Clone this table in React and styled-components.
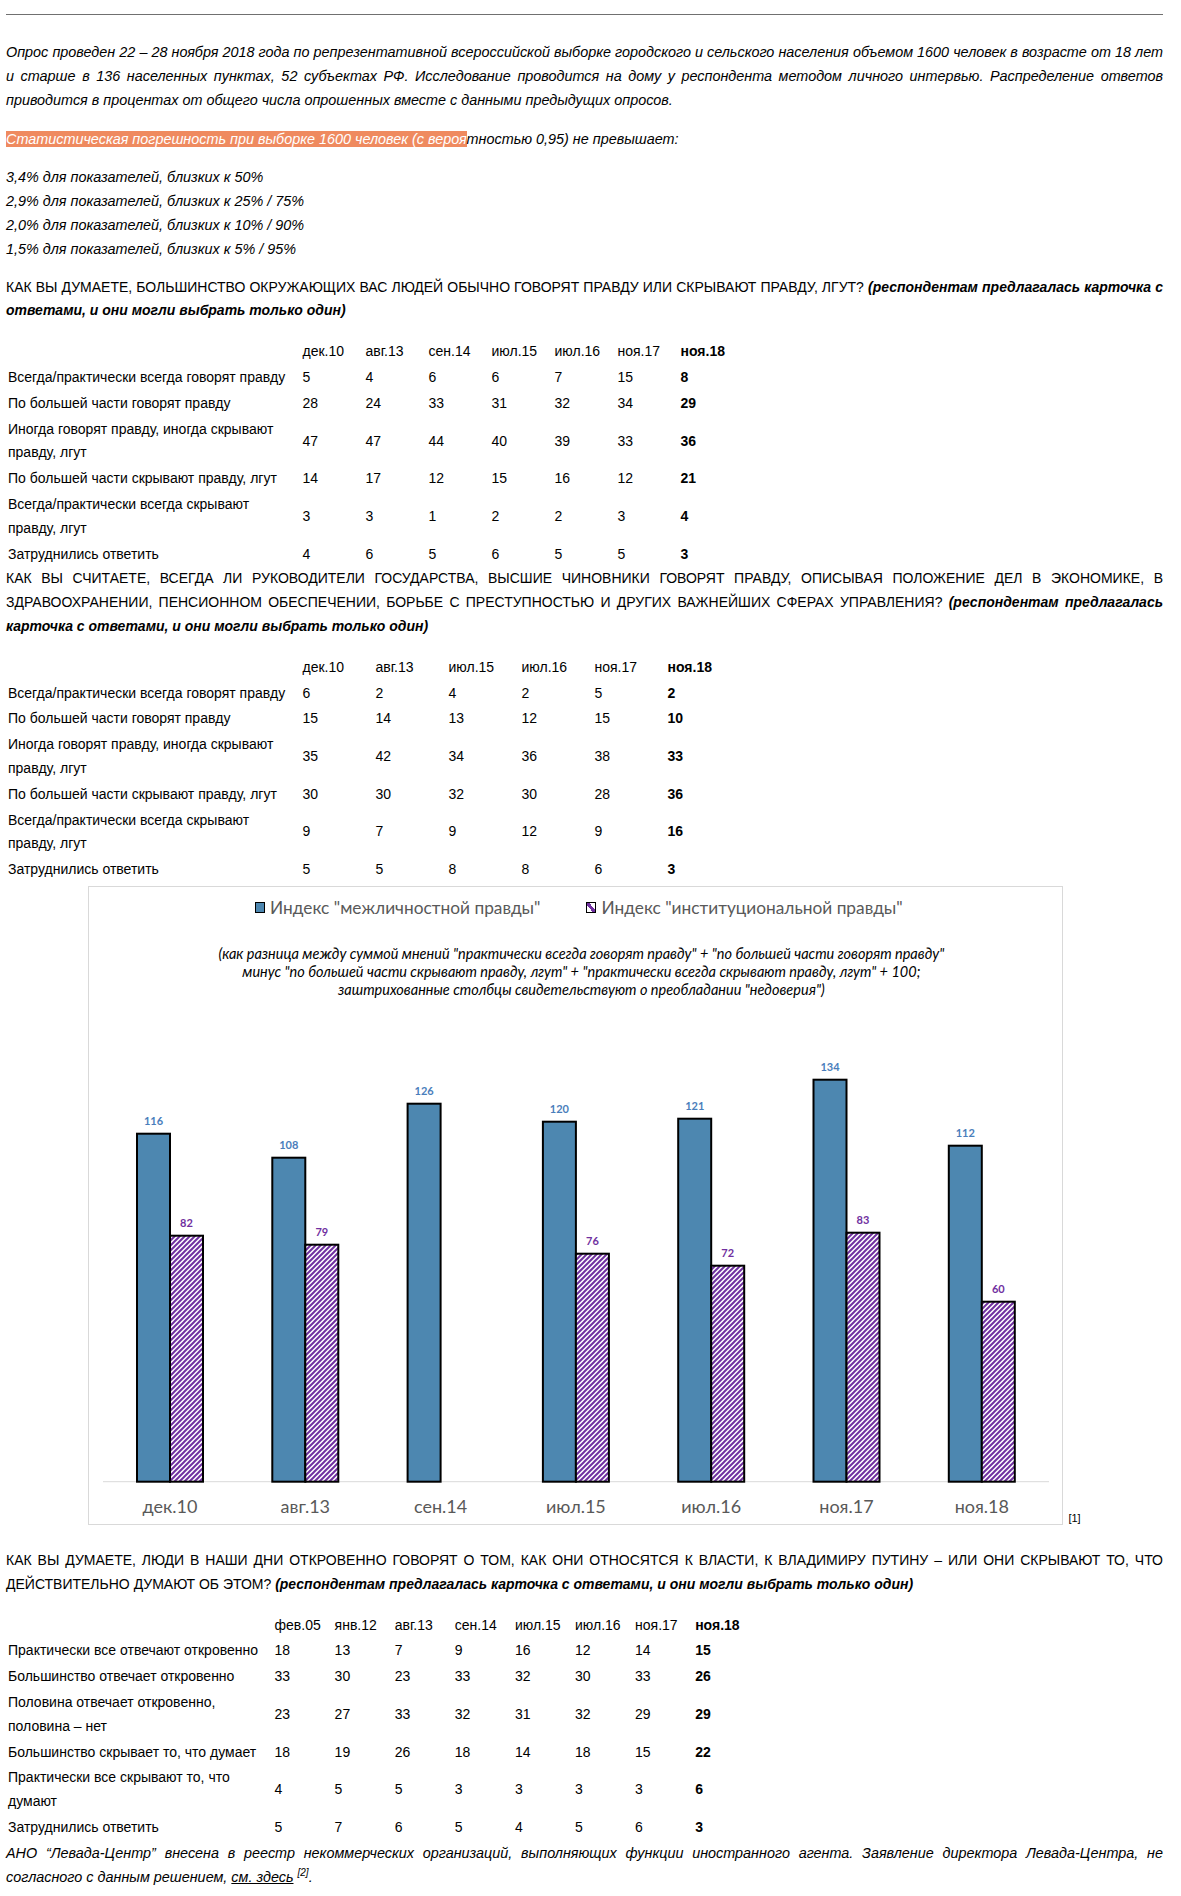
import React from 'react';
import styled, { createGlobalStyle } from 'styled-components';

const GlobalStyle = createGlobalStyle`
  html, body {
    margin: 0;
    padding: 0;
    background: #fff;
  }
  body {
    font-family: 'Liberation Sans', Arial, sans-serif;
    font-size: 14px;
    line-height: 23.8px;
    color: #000;
  }
`;

const Page = styled.div`
  width: 1157px;
  padding: 14px 0 8px 6px;
`;

const Rule = styled.hr`
  margin: 0 0 25px;
  height: 0;
  border: 0;
  border-top: 1px solid #707070;
`;

const Para = styled.p`
  margin: 0 0 ${(p) => (p.$gap === undefined ? 14 : p.$gap)}px;
  text-align: justify;
  font-size: 14.4px;
  line-height: 24.2px;
  font-style: ${(p) => (p.$italic ? 'italic' : 'normal')};
`;

const Mark = styled.span`
  background: #ef8a5f;
  color: #fff;
`;

const Question = styled.p`
  margin: 0 0 16px;
  text-align: justify;
`;

const Hint = styled.em`
  font-weight: bold;
`;

const Table = styled.table`
  border-collapse: collapse;
  table-layout: fixed;
  width: ${(p) => p.$label + p.$col * p.$count}px;

  td {
    box-sizing: border-box;
    padding: 1px 2px;
    vertical-align: middle;
    text-align: left;
  }
  td:first-child {
    width: ${(p) => p.$label}px;
  }
  td:last-child {
    font-weight: bold;
  }
`;

const ChartRow = styled.div`
  display: flex;
  justify-content: center;
  align-items: flex-end;
  margin: 3px 0 24px;
`;

const ChartFrame = styled.div`
  width: 973px;
  height: 637px;
  border: 1px solid #d9d9d9;
  display: flex;
  flex-direction: column;
  font-family: Lato, 'Liberation Sans', sans-serif;
`;

const Legend = styled.div`
  display: flex;
  justify-content: center;
  gap: 46px;
  height: 24px;
  margin-top: 9px;
  padding-left: 6px;
  font-size: 17.3px;
  line-height: 24px;
  color: #595959;
`;

const LegendItem = styled.div`
  display: flex;
  align-items: center;
  gap: 5px;
`;

const Swatch = styled.span`
  width: 8px;
  height: 9px;
  border: 1.5px solid #000;
  background: ${(p) =>
    p.$hatched
      ? 'linear-gradient(to top right, #fff 36%, #7030a0 36%, #7030a0 64%, #fff 64%)'
      : '#4d87b0'};
`;

const Subtitle = styled.div`
  margin-top: 25px;
  height: 54px;
  padding-left: 11px;
  font-size: 14.5px;
  line-height: 18px;
  font-style: italic;
  text-align: center;
  white-space: nowrap;
  color: #000;
`;

const Plot = styled.svg`
  display: block;
  flex: none;
`;

const Note = styled.span`
  margin: 0 0 0 5px;
  font-size: 11px;
  line-height: 14px;
`;

const Link = styled.span`
  text-decoration: underline;
`;

const Sup = styled.sup`
  font-size: 10px;
  line-height: 0;
`;

const Q1_COLS = ['дек.10', 'авг.13', 'сен.14', 'июл.15', 'июл.16', 'ноя.17', 'ноя.18'];
const Q1_ROWS = [
  ['Всегда/практически всегда говорят правду', 5, 4, 6, 6, 7, 15, 8],
  ['По большей части говорят правду', 28, 24, 33, 31, 32, 34, 29],
  ['Иногда говорят правду, иногда скрывают правду, лгут', 47, 47, 44, 40, 39, 33, 36],
  ['По большей части скрывают правду, лгут', 14, 17, 12, 15, 16, 12, 21],
  ['Всегда/практически всегда скрывают правду, лгут', 3, 3, 1, 2, 2, 3, 4],
  ['Затруднились ответить', 4, 6, 5, 6, 5, 5, 3],
];

const Q2_COLS = ['дек.10', 'авг.13', 'июл.15', 'июл.16', 'ноя.17', 'ноя.18'];
const Q2_ROWS = [
  ['Всегда/практически всегда говорят правду', 6, 2, 4, 2, 5, 2],
  ['По большей части говорят правду', 15, 14, 13, 12, 15, 10],
  ['Иногда говорят правду, иногда скрывают правду, лгут', 35, 42, 34, 36, 38, 33],
  ['По большей части скрывают правду, лгут', 30, 30, 32, 30, 28, 36],
  ['Всегда/практически всегда скрывают правду, лгут', 9, 7, 9, 12, 9, 16],
  ['Затруднились ответить', 5, 5, 8, 8, 6, 3],
];

const Q3_COLS = ['фев.05', 'янв.12', 'авг.13', 'сен.14', 'июл.15', 'июл.16', 'ноя.17', 'ноя.18'];
const Q3_ROWS = [
  ['Практически все отвечают откровенно', 18, 13, 7, 9, 16, 12, 14, 15],
  ['Большинство отвечает откровенно', 33, 30, 23, 33, 32, 30, 33, 26],
  ['Половина отвечает откровенно, половина – нет', 23, 27, 33, 32, 31, 32, 29, 29],
  ['Большинство скрывает то, что думает', 18, 19, 26, 18, 14, 18, 15, 22],
  ['Практически все скрывают то, что думают', 4, 5, 5, 3, 3, 3, 3, 6],
  ['Затруднились ответить', 5, 7, 6, 5, 4, 5, 6, 3],
];

const CHART = [
  { label: 'дек.10', a: 116, b: 82 },
  { label: 'авг.13', a: 108, b: 79 },
  { label: 'сен.14', a: 126, b: null },
  { label: 'июл.15', a: 120, b: 76 },
  { label: 'июл.16', a: 121, b: 72 },
  { label: 'ноя.17', a: 134, b: 83 },
  { label: 'ноя.18', a: 112, b: 60 },
];

const BASE = 594.7;
const UNIT = 3;
const BAR = 33;
const STEP = 135.3;
const START = 81;

const DataTable = ({ cols, rows, label, col }) => (
  <Table $label={label} $col={col} $count={cols.length}>
    <tbody>
      <tr>
        <td />
        {cols.map((c) => (
          <td key={c}>{c}</td>
        ))}
      </tr>
      {rows.map((row) => (
        <tr key={row[0]}>
          {row.map((cell, i) => (
            <td key={i}>{cell}</td>
          ))}
        </tr>
      ))}
    </tbody>
  </Table>
);

const TruthChart = () => (
  <ChartRow>
    <ChartFrame>
      <Legend>
        <LegendItem>
          <Swatch />
          Индекс "межличностной правды"
        </LegendItem>
        <LegendItem>
          <Swatch $hatched />
          Индекс "институциональной правды"
        </LegendItem>
      </Legend>
      <Subtitle>
        (как разница между суммой мнений "практически всегда говорят правду" + "по большей части говорят правду"
        <br />
        минус "по большей части скрывают правду, лгут" + "практически всегда скрывают правду, лгут" + 100;
        <br />
        заштрихованные столбцы свидетельствуют о преобладании "недоверия")
      </Subtitle>
      <Plot width="973" height="525" viewBox="0 112 973 525">
        <defs>
          <pattern id="hatch" width="5" height="5" patternUnits="userSpaceOnUse">
            <rect width="5" height="5" fill="#fff" />
            <path d="M-1,1 l2,-2 M0,5 l5,-5 M4,6 l2,-2" stroke="#7030a0" strokeWidth="2" />
          </pattern>
        </defs>
        <line x1="14" x2="960" y1={BASE} y2={BASE} stroke="#d9d9d9" strokeWidth="1" />
        {CHART.map((d, i) => {
          const c = START + STEP * i;
          const ha = d.a * UNIT;
          const hb = d.b ? d.b * UNIT : 0;
          return (
            <g key={d.label}>
              <rect x={c - BAR} y={BASE - ha} width={BAR} height={ha} fill="#4d87b0" stroke="#000" strokeWidth="2" />
              <text x={c - BAR / 2} y={BASE - ha - 9} textAnchor="middle" fontSize="11" fontWeight="bold" fill="#4a7ebb">
                {d.a}
              </text>
              {d.b && (
                <>
                  <rect x={c} y={BASE - hb} width={BAR} height={hb} fill="url(#hatch)" stroke="#000" strokeWidth="2" />
                  <text x={c + BAR / 2} y={BASE - hb - 9} textAnchor="middle" fontSize="11" fontWeight="bold" fill="#7030a0">
                    {d.b}
                  </text>
                </>
              )}
              <text x={c} y="625.5" textAnchor="middle" fontSize="18" fill="#595959">
                {d.label}
              </text>
            </g>
          );
        })}
      </Plot>
    </ChartFrame>
    <Note>[1]</Note>
  </ChartRow>
);

const App = () => (
  <Page>
    <GlobalStyle />
    <Rule />
    <Para $italic>
      Опрос проведен 22 – 28 ноября 2018 года по репрезентативной всероссийской выборке городского и сельского
      населения объемом 1600 человек в возрасте от 18 лет и старше в 136 населенных пунктах, 52 субъектах РФ.
      Исследование проводится на дому у респондента методом личного интервью. Распределение ответов приводится в
      процентах от общего числа опрошенных вместе с данными предыдущих опросов.
    </Para>
    <Para $italic>
      <Mark>Статистическая погрешность при выборке 1600 человек (с вероя</Mark>тностью 0,95) не превышает:
    </Para>
    <Para $italic>
      3,4% для показателей, близких к 50%
      <br />
      2,9% для показателей, близких к 25% / 75%
      <br />
      2,0% для показателей, близких к 10% / 90%
      <br />
      1,5% для показателей, близких к 5% / 95%
    </Para>

    <Question>
      КАК ВЫ ДУМАЕТЕ, БОЛЬШИНСТВО ОКРУЖАЮЩИХ ВАС ЛЮДЕЙ ОБЫЧНО ГОВОРЯТ ПРАВДУ ИЛИ СКРЫВАЮТ ПРАВДУ, ЛГУТ?{' '}
      <Hint>(респондентам предлагалась карточка с ответами, и они могли выбрать только один)</Hint>
    </Question>
    <DataTable cols={Q1_COLS} rows={Q1_ROWS} label={294.5} col={63} />

    <Question>
      КАК ВЫ СЧИТАЕТЕ, ВСЕГДА ЛИ РУКОВОДИТЕЛИ ГОСУДАРСТВА, ВЫСШИЕ ЧИНОВНИКИ ГОВОРЯТ ПРАВДУ, ОПИСЫВАЯ ПОЛОЖЕНИЕ ДЕЛ В
      ЭКОНОМИКЕ, В ЗДРАВООХРАНЕНИИ, ПЕНСИОННОМ ОБЕСПЕЧЕНИИ, БОРЬБЕ С ПРЕСТУПНОСТЬЮ И ДРУГИХ ВАЖНЕЙШИХ СФЕРАХ
      УПРАВЛЕНИЯ? <Hint>(респондентам предлагалась карточка с ответами, и они могли выбрать только один)</Hint>
    </Question>
    <DataTable cols={Q2_COLS} rows={Q2_ROWS} label={294.5} col={73} />

    <TruthChart />

    <Question>
      КАК ВЫ ДУМАЕТЕ, ЛЮДИ В НАШИ ДНИ ОТКРОВЕННО ГОВОРЯТ О ТОМ, КАК ОНИ ОТНОСЯТСЯ К ВЛАСТИ, К ВЛАДИМИРУ ПУТИНУ – ИЛИ
      ОНИ СКРЫВАЮТ ТО, ЧТО ДЕЙСТВИТЕЛЬНО ДУМАЮТ ОБ ЭТОМ?{' '}
      <Hint>(респондентам предлагалась карточка с ответами, и они могли выбрать только один)</Hint>
    </Question>
    <DataTable cols={Q3_COLS} rows={Q3_ROWS} label={266.5} col={60.1} />

    <Para $italic $gap={0}>
      АНО “Левада-Центр” внесена в реестр некоммерческих организаций, выполняющих функции иностранного агента.
      Заявление директора Левада-Центра, не согласного с данным решением, <Link>см. здесь</Link> <Sup>[2]</Sup>.
    </Para>
  </Page>
);

export default App;
